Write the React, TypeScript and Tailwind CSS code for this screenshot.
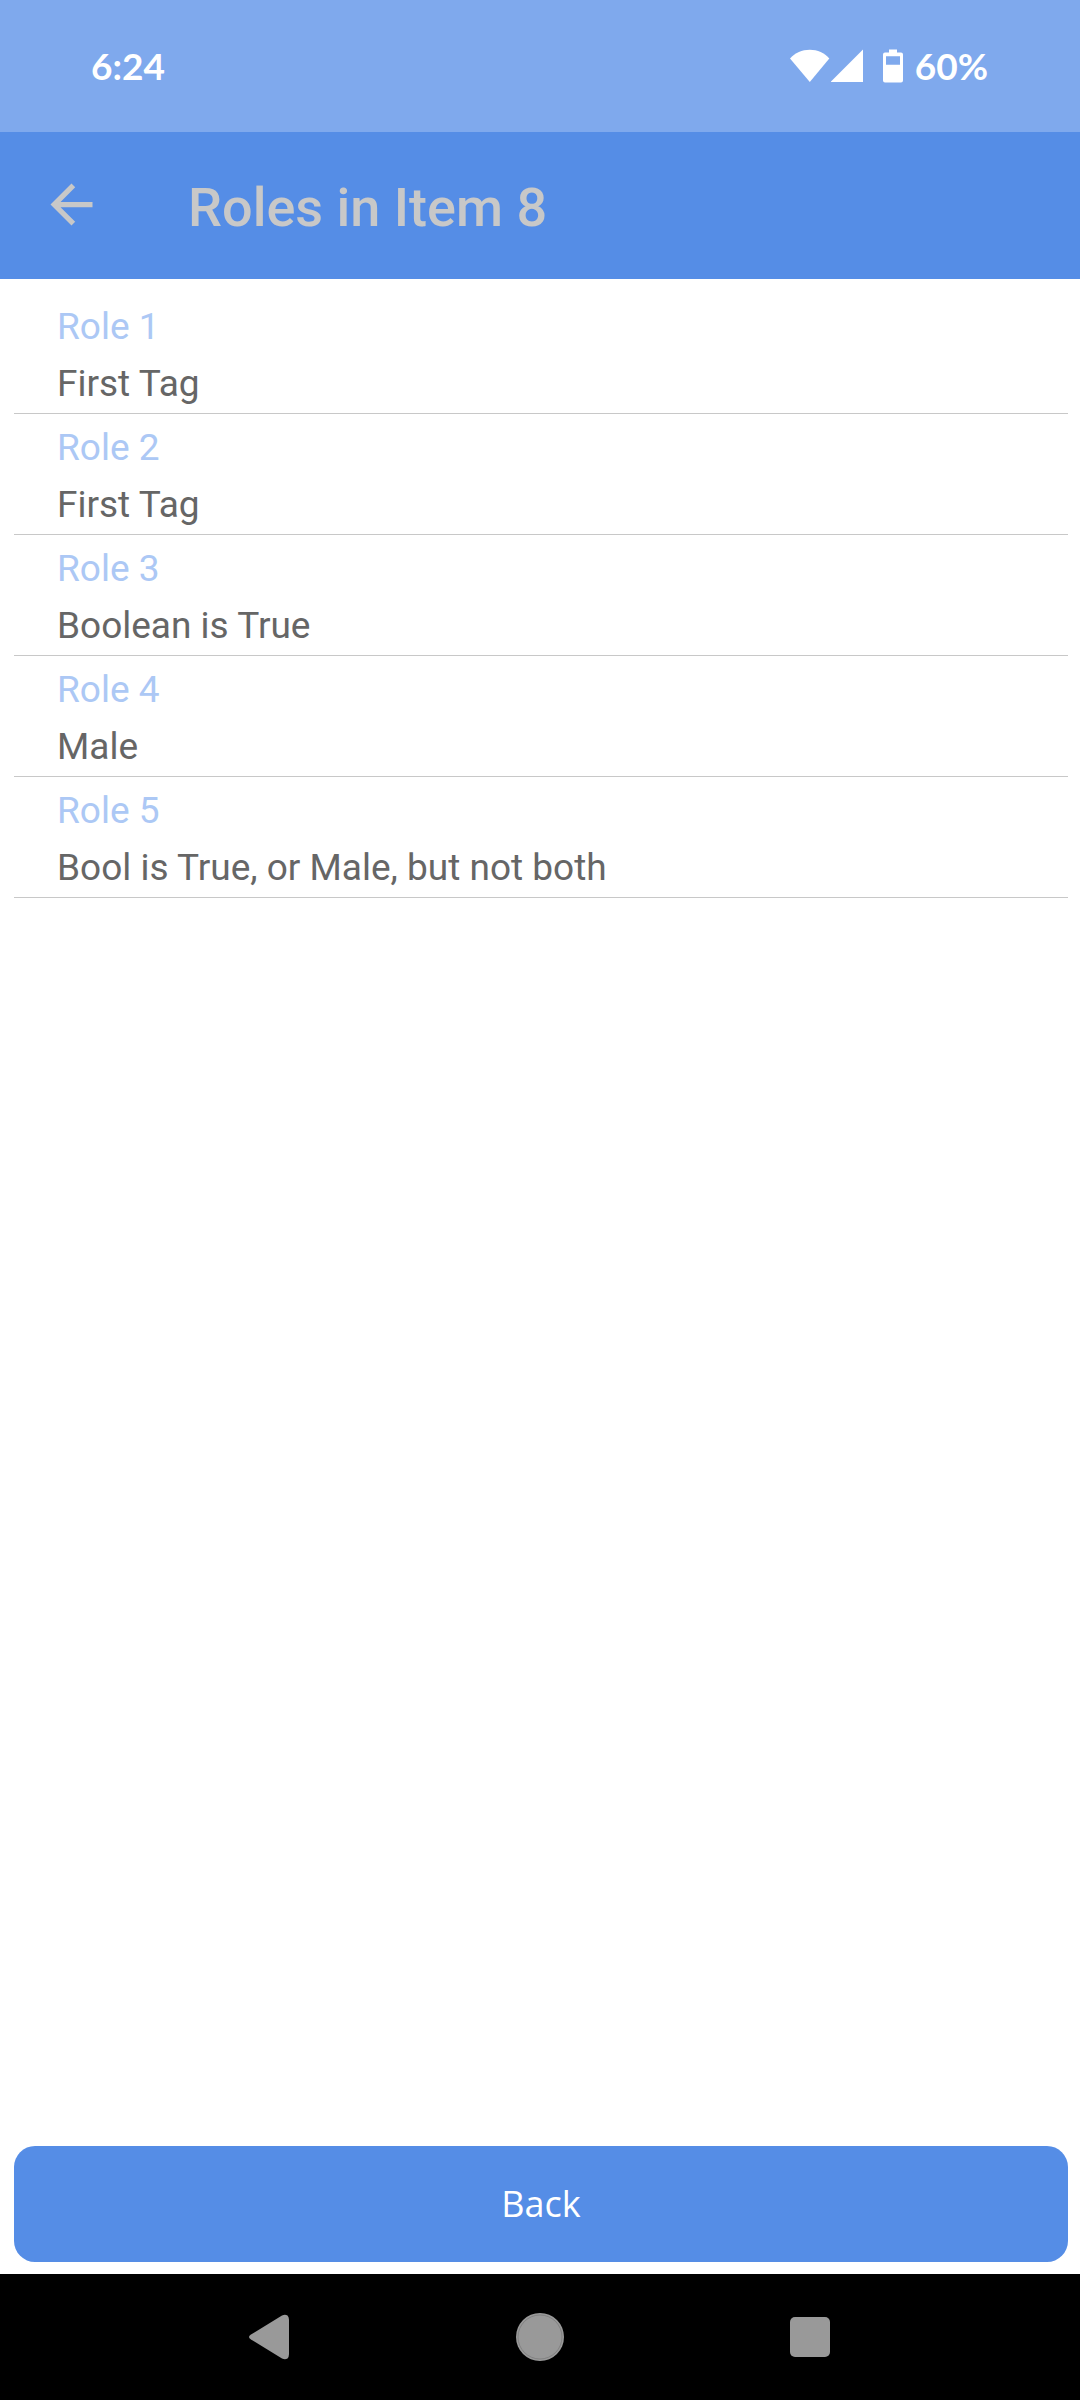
const roles = [
  { name: "Role 1", rule: "First Tag" },
  { name: "Role 2", rule: "First Tag" },
  { name: "Role 3", rule: "Boolean is True" },
  { name: "Role 4", rule: "Male" },
  { name: "Role 5", rule: "Bool is True, or Male, but not both" },
];

function StatusBar() {
  return (
    <div className="flex h-[132px] items-center justify-between bg-[#7fa9ed] pr-[92px] pl-[91px] font-['Lato',sans-serif] text-[37px] leading-[44px] font-bold text-white">
      <span>6:24</span>
      <div className="flex items-center">
        <svg className="h-[34px] w-[40px]" viewBox="0 0 40 34" fill="currentColor" aria-hidden="true">
          <path d="M0 9.5C5 4 12 .8 19.800 .8S34.500 4 39.300 9.500L19.800 33Z" />
        </svg>
        <svg className="ml-px h-[34px] w-[34px]" viewBox="0 0 34 34" fill="currentColor" aria-hidden="true">
          <path d="M32 .5V33H-.5Z" />
        </svg>
        <svg className="ml-[18px] h-[34px] w-[20px]" viewBox="0 0 20 34" aria-hidden="true">
          <path
            fill="currentColor"
            fillRule="evenodd"
            d="M6 .5H14V3.500H18A2 2 0 0 1 20 5.500V31.500A2 2 0 0 1 18 33.500H2A2 2 0 0 1 0 31.500V5.500A2 2 0 0 1 2 3.500H6ZM3 7.200V15.800H17V7.200Z"
          />
        </svg>
        <span className="ml-3">60%</span>
      </div>
    </div>
  );
}

function Header() {
  return (
    <header className="flex h-[147px] items-center bg-[#558de6] pt-0.5 pl-10 text-[#c8c8c8]">
      <button type="button" aria-label="Navigate up" className="mb-1 flex size-[63px] items-center justify-center">
        <svg className="size-[63px]" viewBox="0 0 24 24" fill="currentColor" aria-hidden="true">
          <path d="M20 11H7.830l5.590-5.590L12 4l-8 8 8 8 1.410-1.410L7.830 13H20v-2z" />
        </svg>
      </button>
      <h1 className="ml-[85px] pt-0.5 text-[54px] leading-[62px] font-medium">Roles in Item 8</h1>
    </header>
  );
}

function NavigationBar() {
  return (
    <nav className="grid h-[126px] grid-cols-3 bg-black px-[12.5%] text-[#999999]">
      <button type="button" aria-label="Back" className="flex items-center justify-center">
        <svg className="size-[48px]" viewBox="0 0 48 48" fill="currentColor" aria-hidden="true">
          <path d="M5 21.500 36 2.500Q39 .8 41.500 2.500 43 4 43 7V41Q43 44 41.500 45.500 39 47 36 45.500L5 26.500Q1 24 5 21.500Z" />
        </svg>
      </button>
      <button type="button" aria-label="Home" className="flex items-center justify-center">
        <svg className="size-[48px]" viewBox="0 0 48 48" aria-hidden="true">
          <circle cx="24" cy="24" r="24" fill="currentColor" />
          <circle cx="24" cy="24" r="22" fill="none" stroke="#777777" strokeWidth=".7" />
        </svg>
      </button>
      <button type="button" aria-label="Overview" className="flex items-center justify-center">
        <svg className="size-[40px]" viewBox="0 0 40 40" fill="currentColor" aria-hidden="true">
          <rect width="40" height="40" rx="5" />
        </svg>
      </button>
    </nav>
  );
}

export default function App() {
  return (
    <div className="flex min-h-screen flex-col bg-white font-['Roboto',sans-serif]">
      <StatusBar />
      <Header />
      <main className="flex flex-1 flex-col pt-[14px] pr-3 pb-3 pl-[14px]">
        <ul className="flex-1">
          {roles.map((role) => (
            <li
              key={role.name}
              className="border-b border-[#c8c8c8] pt-[5px] pb-px pl-[43px] text-[37px] leading-[57px] text-[#666666]"
            >
              <p className="text-[#acc8f5]">{role.name}</p>
              <p>{role.rule}</p>
            </li>
          ))}
        </ul>
        <button
          type="button"
          className="h-[116px] rounded-[21px] bg-[#558de6] font-['Open_Sans',sans-serif] text-[36px] leading-[50px] text-white"
        >
          Back
        </button>
      </main>
      <NavigationBar />
    </div>
  );
}
